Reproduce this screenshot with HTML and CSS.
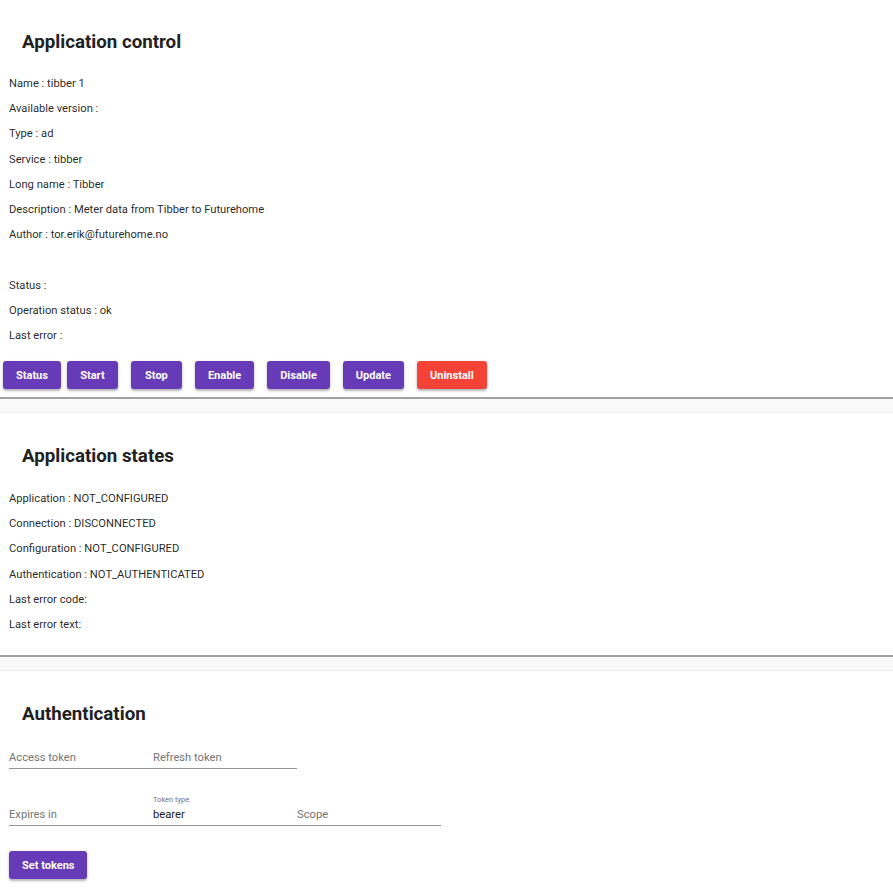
FILE: index.html
```html
<!DOCTYPE html>
<html>
<head>
<meta charset="utf-8">
<link rel="stylesheet" href="styles.css">
</head>
<body>
<section class="card">
  <h3 class="title title-control">Application control</h3>
  <div class="rows">
    <div class="row">Name : tibber 1</div>
    <div class="row">Available version :</div>
    <div class="row">Type : ad</div>
    <div class="row">Service : tibber</div>
    <div class="row">Long name : Tibber</div>
    <div class="row">Description : Meter data from Tibber to Futurehome</div>
    <div class="row">Author : tor.erik@futurehome.no</div>
    <div class="row"></div>
    <div class="row">Status :</div>
    <div class="row">Operation status : ok</div>
    <div class="row">Last error :</div>
  </div>
  <div class="btn-row">
    <button class="btn btn-tight">Status</button>
    <button class="btn">Start</button>
    <button class="btn">Stop</button>
    <button class="btn">Enable</button>
    <button class="btn">Disable</button>
    <button class="btn">Update</button>
    <button class="btn btn-warn">Uninstall</button>
  </div>
</section>
<div class="divider"></div>
<section class="card card-states">
  <h3 class="title">Application states</h3>
  <div class="rows">
    <div class="row">Application : NOT_CONFIGURED</div>
    <div class="row">Connection : DISCONNECTED</div>
    <div class="row">Configuration : NOT_CONFIGURED</div>
    <div class="row">Authentication : NOT_AUTHENTICATED</div>
    <div class="row">Last error code:</div>
    <div class="row">Last error text:</div>
  </div>
</section>
<div class="divider"></div>
<section class="card card-auth">
  <h3 class="title title-auth">Authentication</h3>
  <div class="form">
    <div class="field-row">
      <div class="field"><span class="float"></span><span class="input placeholder">Access token</span></div>
      <div class="field"><span class="float"></span><span class="input placeholder">Refresh token</span></div>
    </div>
    <div class="field-row field-row-last">
      <div class="field"><span class="float"></span><span class="input placeholder">Expires in</span></div>
      <div class="field"><span class="float">Token type</span><span class="input">bearer</span></div>
      <div class="field"><span class="float"></span><span class="input placeholder">Scope</span></div>
    </div>
  </div>
  <div class="btn-row btn-row-form">
    <button class="btn">Set tokens</button>
  </div>
</section>
</body>
</html>
```
FILE: styles.css
```css
html, body {
  margin: 0;
  padding: 0;
  background: #ffffff;
  font-family: Roboto, "Liberation Sans", Arial, sans-serif;
  color: rgba(0, 0, 0, 0.87);
}

.card {
  padding-top: 31px;
  padding-bottom: 8px;
}

.card-states {
  padding-top: 32px;
  padding-bottom: 18px;
}

.card-auth {
  padding-top: 32px;
}

.title {
  margin: 0 0 19px 22px;
  font-size: 18.72px;
  line-height: 22px;
  font-weight: 700;
  color: #212121;
}

.title-control {
  margin-bottom: 18px;
}

.title-auth {
  margin-bottom: 13px;
}

.rows {
  padding-left: 9px;
}

.row {
  height: 25.2px;
  line-height: 25.2px;
  font-size: 11.2px;
  white-space: nowrap;
}

.btn-row {
  display: flex;
  gap: 13px;
  padding-left: 3px;
  margin-top: 13px;
}

.btn {
  min-width: 51px;
  height: 28px;
  padding: 0 13px;
  border: none;
  border-radius: 3px;
  background: #673ab7;
  color: #ffffff;
  font-family: Roboto, "Liberation Sans", Arial, sans-serif;
  font-size: 11px;
  font-weight: 700;
  box-shadow: 0 2px 2px rgba(0, 0, 0, 0.22), 0 1px 4px rgba(0, 0, 0, 0.12);
  cursor: pointer;
}

.btn-tight {
  margin-right: -7px;
}

.btn-warn {
  background: #f44336;
}

.divider {
  height: 13px;
  background: #f9f9f9;
  border-top: 2px solid #a2a2a2;
  border-bottom: 1px solid #efefef;
}

.form {
  padding-left: 9px;
}

.field-row {
  display: flex;
  margin-bottom: 26px;
}

.field-row-last {
  margin-bottom: 25px;
}

.field {
  width: 144px;
  display: flex;
  flex-direction: column;
  border-bottom: 1px solid #949494;
}

.float {
  height: 10px;
  line-height: 10px;
  font-size: 7.5px;
  color: #757575;
}

.input {
  height: 20px;
  line-height: 20px;
  font-size: 11.2px;
  color: #212121;
}

.placeholder {
  color: #757575;
}

.btn-row-form {
  margin-top: 0;
  padding-left: 9px;
  padding-bottom: 10px;
}
```
